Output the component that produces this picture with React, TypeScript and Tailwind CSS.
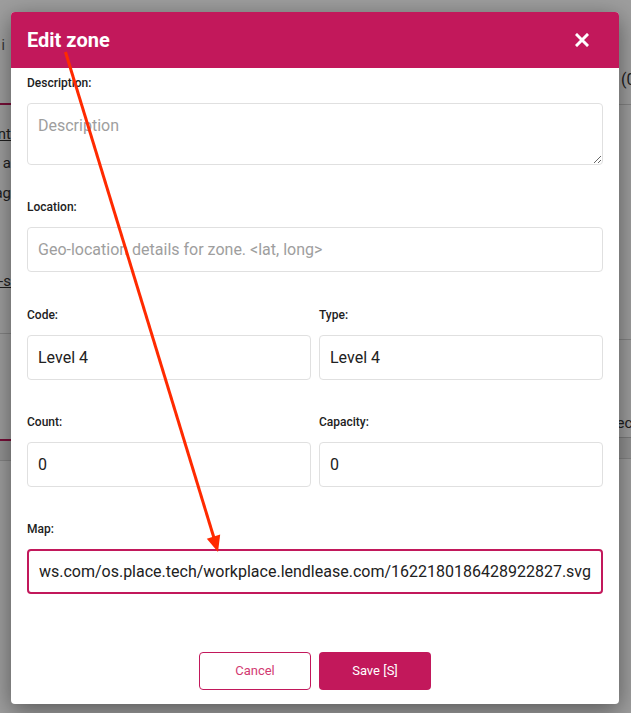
import React from "react";

function Label({ children }: { children: React.ReactNode }) {
  return (
    <div className="h-4 text-[12px] leading-4 font-medium text-[#212121]">{children}</div>
  );
}

function TextInput({ value, placeholder }: { value?: string; placeholder?: string }) {
  return (
    <input
      readOnly
      value={value ?? ""}
      placeholder={placeholder}
      className="mt-3 block h-[45px] w-full rounded-[4px] border border-[#e0e0e0] bg-white px-[10px] text-[16px] text-[#212121] outline-none placeholder:text-[#9e9e9e] font-['Roboto',sans-serif]"
    />
  );
}

export default function App() {
  return (
    <div className="relative h-[713px] w-[631px] overflow-hidden bg-white font-['Roboto',sans-serif]">
      {/* underlying page */}
      <div className="flex h-full w-full">
        <div className="flex w-[11px] flex-col items-end overflow-hidden text-[#333]">
          <div className="mt-[37px] mr-[6px] h-4 whitespace-nowrap text-[14px] leading-4 text-[#555]">i</div>
          <div className="mt-[50px] h-[2px] w-full bg-[#c2185b]" />
          <div className="mt-[19px] h-5 whitespace-nowrap text-[15px] leading-5 underline">Content</div>
          <div className="mt-[9px] h-5 whitespace-nowrap text-[15px] leading-5">a </div>
          <div className="mt-[10px] h-5 whitespace-nowrap text-[15px] leading-5">Manag</div>
          <div className="mt-[68px] h-5 whitespace-nowrap text-[15px] leading-5 underline">Sub-s</div>
          <div className="mt-[42px] h-px w-full bg-[#d6d6d6]" />
          <div className="mt-[105px] h-[2px] w-full bg-[#c2185b]" />
          <div className="h-[19px] w-full bg-[#eeeeee]" />
          <div className="h-px w-full bg-[#d6d6d6]" />
        </div>
        <div className="flex-1" />
        <div className="flex w-[12px] flex-col items-start overflow-hidden text-[#333]">
          <div className="mt-[70px] ml-[2px] h-5 whitespace-nowrap text-[16px] leading-5">(0)</div>
          <div className="mt-[14px] h-px w-full bg-[#d6d6d6]" />
          <div className="mt-[234px] h-px w-full bg-[#d6d6d6]" />
          <div className="mt-[73px] ml-[-23px] h-5 whitespace-nowrap text-[15px] leading-5">Selected</div>
          <div className="mt-[4px] h-px w-full bg-[#c8c8c8]" />
          <div className="h-[20px] w-full bg-[#eeeeee]" />
          <div className="h-px w-full bg-[#d6d6d6]" />
        </div>
      </div>

      {/* backdrop */}
      <div className="absolute inset-0 bg-black/[0.38]" />

      {/* modal */}
      <div className="absolute left-[11px] top-[12px] w-[608px] overflow-hidden rounded-[4px] bg-white shadow-[0_6px_24px_rgba(0,0,0,0.45)]">
        <div className="flex h-[56px] items-center justify-between bg-[#c2185b] pl-4 pr-[30px]">
          <div className="text-[20px] font-bold leading-6 text-white">Edit zone</div>
          <svg width="14" height="14" viewBox="0 0 14 14">
            <path d="M2 2 L12 12 M12 2 L2 12" stroke="white" strokeWidth="3" strokeLinecap="square" />
          </svg>
        </div>

        <div className="px-4 pt-[7px] pb-[14px]">
          <Label>Description:</Label>
          <textarea
            readOnly
            placeholder="Description"
            className="mt-3 block h-[62px] w-full rounded-[4px] border border-[#e0e0e0] bg-white px-[10px] py-[10px] text-[16px] leading-6 text-[#212121] outline-none placeholder:text-[#9e9e9e] font-['Roboto',sans-serif]"
          />

          <div className="mt-[34px]">
            <Label>Location:</Label>
            <TextInput placeholder="Geo-location details for zone. <lat, long>" />
          </div>

          <div className="mt-[35px] grid grid-cols-2 gap-x-2">
            <div>
              <Label>Code:</Label>
              <TextInput value="Level 4" />
            </div>
            <div>
              <Label>Type:</Label>
              <TextInput value="Level 4" />
            </div>
          </div>

          <div className="mt-[34px] grid grid-cols-2 gap-x-2">
            <div>
              <Label>Count:</Label>
              <TextInput value="0" />
            </div>
            <div>
              <Label>Capacity:</Label>
              <TextInput value="0" />
            </div>
          </div>

          <div className="mt-[34px]">
            <Label>Map:</Label>
            <div className="mt-3 flex h-[45px] w-full items-center rounded-[4px] border-2 border-[#c2185b] bg-white px-[10px]">
              <div className="flex min-w-0 flex-1 justify-end overflow-hidden">
                <span className="whitespace-nowrap text-[16px] text-[#212121]">
                  https://s3-ap-southeast-2.amazonaws.com/os.place.tech/workplace.lendlease.com/1622180186428922827.svg
                </span>
              </div>
            </div>
          </div>

          <div className="mt-[58px] flex justify-center gap-2">
            <button className="h-[38px] w-[112px] rounded-[4px] border border-[#c2185b] bg-white text-[13px] text-[#d23a72]">
              Cancel
            </button>
            <button className="h-[38px] w-[112px] rounded-[4px] bg-[#c2185b] text-[13px] text-white">
              Save [S]
            </button>
          </div>
        </div>
      </div>

      {/* annotation arrow */}
      <svg className="pointer-events-none absolute inset-0" width="631" height="713" viewBox="0 0 631 713">
        <line x1="65.5" y1="52" x2="214" y2="538" stroke="#ff2a00" strokeWidth="3" />
        <polygon points="218,552 206.8,538.8 220.2,534.6" fill="#ff2a00" />
      </svg>
    </div>
  );
}
